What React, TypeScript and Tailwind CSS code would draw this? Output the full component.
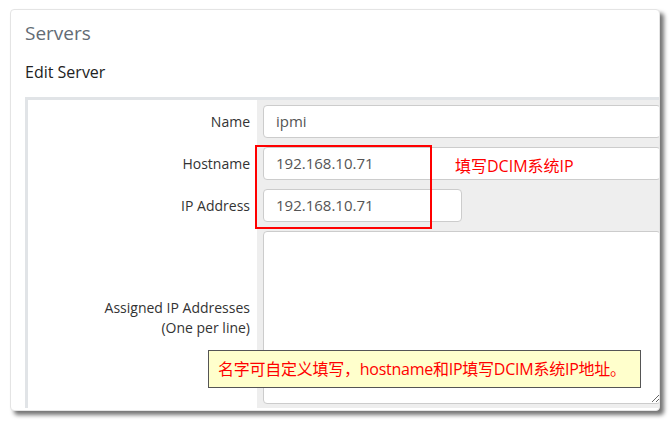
import React from "react";

const ui = { fontFamily: '"Open Sans", "Noto Sans CJK SC", sans-serif' };
const note = { fontFamily: '"Open Sans", "Noto Sans CJK SC", sans-serif' };

interface FieldRowProps {
  label: React.ReactNode;
  children: React.ReactNode;
}

function FieldRow({ label, children }: FieldRowProps) {
  return (
    <>
      <div className="flex items-center justify-end pr-[7px] pt-[1px] text-right text-[14px] leading-[20px] text-[#333]">
        {label}
      </div>
      <div className="bg-[#eeeeee] pl-[6px] pt-[5px] pb-[4px]">{children}</div>
    </>
  );
}

function TextInput({ value, narrow = false }: { value: string; narrow?: boolean }) {
  return (
    <div
      className={`flex h-[33px] items-center rounded-[4px] border border-[#cccccc] bg-white pl-[12px] text-[15px] text-[#555] ${
        narrow ? "w-[199px]" : "w-full"
      }`}
    >
      {value}
    </div>
  );
}

export default function App() {
  return (
    <div className="relative h-[423px] w-[671px] overflow-hidden bg-white" style={ui}>
      {/* Screenshot frame */}
      <div className="ml-[10px] mt-[9px] h-[402px] w-[650px] overflow-hidden rounded-[4px] border border-[#e4e4e4] bg-white pl-[14px] pt-[10px] shadow-[4px_4px_4px_rgba(0,0,0,0.55)]">
        <h1 className="text-[19px] leading-[26px] text-[#636b74]">Servers</h1>
        <h2 className="mt-[15px] text-[16px] leading-[22px] text-[#222]">Edit Server</h2>

        {/* Form box */}
        <div className="mr-[-2px] mt-[14px] border-l-[3px] border-t-[3px] border-[#e1e4e7]">
          <div className="grid grid-cols-[229px_1fr]">
            <FieldRow label="Name">
              <TextInput value="ipmi" />
            </FieldRow>
            <FieldRow label="Hostname">
              <TextInput value="192.168.10.71" />
            </FieldRow>
            <FieldRow label="IP Address">
              <TextInput value="192.168.10.71" narrow />
            </FieldRow>
            <FieldRow
              label={
                <span>
                  Assigned IP Addresses
                  <br />
                  (One per line)
                </span>
              }
            >
              <textarea
                readOnly
                className="block h-[173px] w-full rounded-[4px] border border-[#cccccc] bg-white"
              />
            </FieldRow>
          </div>
        </div>
      </div>

      {/* Annotations */}
      <div className="absolute left-[255px] top-[145px] h-[84px] w-[177px] border-2 border-[#ff0000]" />
      <div
        className="absolute left-[455px] top-[155px] text-[16px] leading-[22px] text-[#ff0000]"
        style={note}
      >
        填写DCIM系统IP
      </div>
      <div
        className="absolute left-[208px] top-[350px] flex h-[38px] w-[433px] items-center border border-[#555] bg-[#ffffcc] pl-[9px] text-[16px] tracking-[-0.25px] text-[#ff0000]"
        style={note}
      >
        名字可自定义填写，hostname和IP填写DCIM系统IP地址。
      </div>
    </div>
  );
}
